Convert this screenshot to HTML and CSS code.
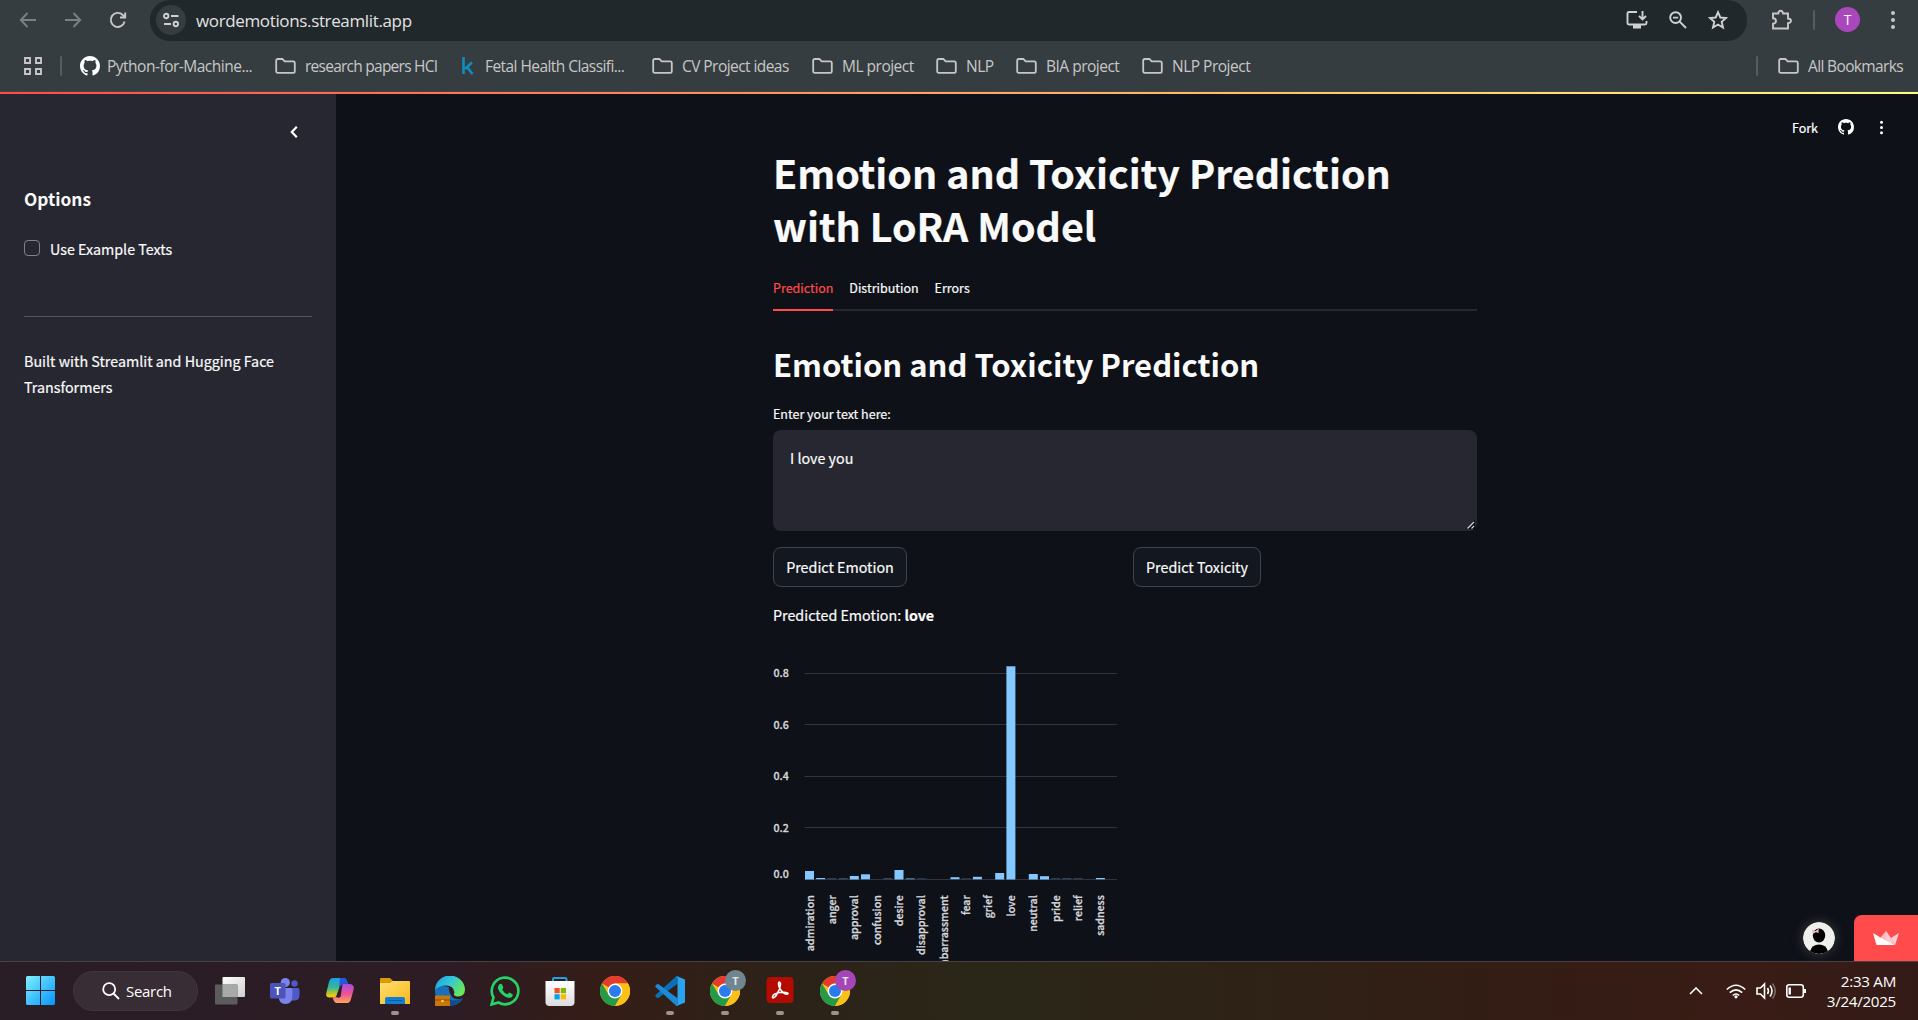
FILE: index.html
```html
<!DOCTYPE html>
<html lang="en">
<head>
<meta charset="utf-8">
<title>Emotion and Toxicity Prediction</title>
<link rel="stylesheet" href="styles.css">
</head>
<body>
<svg width="0" height="0" class="defs" aria-hidden="true">
  <defs>
    <symbol id="folder" viewBox="0 0 21 16"><path d="M1.2 2.6Q1.2 1 2.8 1H7.4L9.6 3.4H18.2Q19.8 3.4 19.8 5V13.2Q19.8 14.8 18.2 14.8H2.8Q1.2 14.8 1.2 13.2Z" fill="none" stroke="currentColor" stroke-width="1.8"/></symbol>
    <symbol id="github" viewBox="0 0 16 16"><path fill="currentColor" d="M8 0C3.58 0 0 3.58 0 8c0 3.54 2.29 6.53 5.47 7.59.4.07.55-.17.55-.38 0-.19-.01-.82-.01-1.49-2.01.37-2.53-.49-2.69-.94-.09-.23-.48-.94-.82-1.13-.28-.15-.68-.52-.01-.53.63-.01 1.08.58 1.23.82.72 1.21 1.87.87 2.33.66.07-.52.28-.87.51-1.07-1.78-.2-3.64-.89-3.64-3.95 0-.87.31-1.59.82-2.15-.08-.2-.36-1.02.08-2.12 0 0 .67-.21 2.2.82.64-.18 1.32-.27 2-.27s1.36.09 2 .27c1.53-1.04 2.2-.82 2.2-.82.44 1.1.16 1.92.08 2.12.51.56.82 1.27.82 2.15 0 3.07-1.87 3.75-3.65 3.95.29.25.54.73.54 1.48 0 1.07-.01 1.93-.01 2.2 0 .21.15.46.55.38A8.01 8.01 0 0 0 16 8c0-4.42-3.58-8-8-8Z"/></symbol>
    <symbol id="dots" viewBox="0 0 6 20"><g fill="currentColor"><circle cx="3" cy="3" r="2"/><circle cx="3" cy="10" r="2"/><circle cx="3" cy="17" r="2"/></g></symbol>
    <symbol id="chrome" viewBox="0 0 30 30">
      <circle cx="15" cy="15" r="15" fill="#fbc116"/>
      <path d="M15 15 2 7.5A15 15 0 0 1 28 7.5H15Z" fill="#e33b2e"/>
      <path d="M2 7.5A15 15 0 0 0 15 30L21.5 18.7 8.6 18.5Z" fill="#259b4a"/>
      <path d="M15 30A15 15 0 0 0 28 7.5H15L21.5 18.7Z" fill="#fbc116"/>
      <circle cx="15" cy="15" r="7.4" fill="#fff"/><circle cx="15" cy="15" r="6" fill="#2a7bee"/>
    </symbol>
    <linearGradient id="win" x1="0" y1="0" x2="1" y2="1"><stop offset="0" stop-color="#7ff0ff"/><stop offset="1" stop-color="#0794fa"/></linearGradient>
    <linearGradient id="gray" x1="0" y1="0" x2="1" y2="1"><stop offset="0" stop-color="#fff"/><stop offset="1" stop-color="#cfcfcf"/></linearGradient>
    <linearGradient id="copA" x1="0" y1="0" x2="0" y2="1"><stop offset="0" stop-color="#1b9df0"/><stop offset=".5" stop-color="#38b98d"/><stop offset=".9" stop-color="#efc70f"/></linearGradient>
    <linearGradient id="copB" x1="0" y1="0" x2="0" y2="1"><stop offset="0" stop-color="#a84bea"/><stop offset=".55" stop-color="#f0558d"/><stop offset="1" stop-color="#ffa95a"/></linearGradient>
    <linearGradient id="fold" x1="0" y1="0" x2="1" y2="1"><stop offset="0" stop-color="#ffdf70"/><stop offset="1" stop-color="#f9b81a"/></linearGradient>
    <linearGradient id="edgeA" x1="0" y1="0" x2="1" y2=".5"><stop offset="0" stop-color="#1f9fe4"/><stop offset=".5" stop-color="#31c4dc"/><stop offset="1" stop-color="#67e75a"/></linearGradient>
    <linearGradient id="bag" x1="0" y1="0" x2="0" y2="1"><stop offset="0" stop-color="#fff"/><stop offset="1" stop-color="#dcdcdc"/></linearGradient>
  </defs>
</svg>

<header class="browser">
  <div class="toolbar">
    <div class="nav">
      <svg class="dim" width="18" height="18" viewBox="0 0 18 18"><path d="M17 9H2M8.500 2 1.800 9l6.700 7" /></svg>
      <svg class="dim" width="18" height="18" viewBox="0 0 18 18"><path d="M1 9H16M9.500 2l6.700 7-6.700 7" /></svg>
      <svg width="18" height="18" viewBox="0 0 18 18"><path d="M15.600 10.500A7 7 0 1 1 13.800 4L16 6.300M16.200 1.500V6.500H11" /></svg>
    </div>
    <div class="omnibox">
      <div class="siteinfo"><svg width="16" height="16" viewBox="0 0 16 16"><circle cx="3.200" cy="4" r="2.200"/><path d="M8 4h7.500M1 12h7"/><circle cx="12.800" cy="12" r="2.200"/></svg></div>
      <span class="url">wordemotions.streamlit.app</span>
      <div class="omni-icons">
        <svg width="22" height="20" viewBox="0 0 22 20"><path d="M11 2H3Q1.500 2 1.500 3.500V13Q1.500 14.500 3 14.500H19Q20.500 14.500 20.500 13V11M16.500 1V9M13 6l3.500 3.500L20 6"/><path d="M7 14.500h8V18.500H7Z" fill="currentColor" stroke="none"/></svg>
        <svg width="18" height="18" viewBox="0 0 18 18"><circle cx="6.600" cy="6.600" r="5.400"/><path d="M10.700 10.700 17 17M4 6.600h5.200"/></svg>
        <svg width="20" height="20" viewBox="0 0 20 20"><path d="M10 2.200 12.300 7.500 18 8 13.700 11.800 15 17.500 10 14.500 5 17.500 6.300 11.800 2 8 7.700 7.500Z"/></svg>
      </div>
    </div>
    <div class="tools">
      <svg width="22" height="22" viewBox="0 0 22 22"><path d="M2 4.500H7.300Q7.500 1.800 9.600 1.800T12 4.500H17V9.500Q20 9.700 20 11.800T17 14.200V19.500H2V14.800Q5 14.500 5 12T2 9.300Z"/></svg>
      <i class="sep"></i>
      <span class="profile">T</span>
      <svg class="kebab" width="6" height="20"><use href="#dots"/></svg>
    </div>
  </div>
  <nav class="bookmarks">
    <svg class="apps" width="20" height="20" viewBox="0 0 20 20"><path d="M2 2h5v5H2ZM13 2h5v5h-5ZM2 13h5v5H2ZM13 13h5v5h-5Z"/></svg>
    <i class="sep"></i>
    <span class="bm b1"><svg class="white" width="20" height="20"><use href="#github"/></svg><span>Python-for-Machine...</span></span>
    <span class="bm b2"><svg width="21" height="16"><use href="#folder"/></svg><span>research papers HCI</span></span>
    <span class="bm b3"><svg class="kaggle" width="12" height="20" viewBox="0 0 12 20"><path d="M1.500 1V18M10 6.500 3 13M5 11l5.500 7"/></svg><span>Fetal Health Classifi...</span></span>
    <span class="bm b4"><svg width="21" height="16"><use href="#folder"/></svg><span>CV Project ideas</span></span>
    <span class="bm b5"><svg width="21" height="16"><use href="#folder"/></svg><span>ML project</span></span>
    <span class="bm b6"><svg width="21" height="16"><use href="#folder"/></svg><span>NLP</span></span>
    <span class="bm b7"><svg width="21" height="16"><use href="#folder"/></svg><span>BIA project</span></span>
    <span class="bm b8"><svg width="21" height="16"><use href="#folder"/></svg><span>NLP Project</span></span>
    <i class="sep last"></i>
    <span class="bm b9"><svg width="21" height="16"><use href="#folder"/></svg><span>All Bookmarks</span></span>
  </nav>
</header>
<div class="decoration"></div>

<div class="app">
  <aside class="sidebar">
    <svg class="collapse" width="8" height="14" viewBox="0 0 8 14"><path d="M6.800 1.800 1.800 7l5 5.200"/></svg>
    <h2>Options</h2>
    <label class="check"><i></i><span>Use Example Texts</span></label>
    <hr>
    <p>Built with Streamlit and Hugging Face<br>Transformers</p>
  </aside>
  <main>
    <div class="block">
      <h1>Emotion and Toxicity Prediction<br>with LoRA Model</h1>
      <div class="tabs"><span class="on">Prediction</span><span>Distribution</span><span>Errors</span></div>
      <h2>Emotion and Toxicity Prediction</h2>
      <div class="label">Enter your text here:</div>
      <div class="textarea">I love you<svg width="9" height="9" viewBox="0 0 9 9"><path d="M0 9 9 0V9Z" fill="#08090c"/><path d="M1.500 8.500 8 2M5.500 8.500 8 6" stroke="#d5d5d8" stroke-width="1.300"/></svg></div>
      <div class="cols"><div><button>Predict Emotion</button></div><div><button class="tox">Predict Toxicity</button></div></div>
      <p class="result">Predicted Emotion: <b>love</b></p>
      <svg class="chart" width="352" height="321" viewBox="0 0 352 321">
        <g class="grid"><path d="M31.500 33.500H344M31.500 84.500H344M31.500 136.500H344M31.500 187.500H344M31.500 239.500H344"/></g>
        <g class="bars">
          <rect x="32" y="231" width="9" height="8.500"/><rect x="43.200" y="238" width="9" height="1.200"/>
          <rect x="54.400" y="238.500" width="9" height=".6" opacity=".5"/><rect x="65.600" y="238.500" width="9" height=".6" opacity=".6"/>
          <rect x="76.800" y="236" width="9" height="3.500"/><rect x="88" y="234.300" width="9" height="5"/>
          <rect x="110.300" y="238.500" width="9" height=".6" opacity=".6"/><rect x="121.500" y="230" width="9" height="9.500"/>
          <rect x="132.700" y="238.500" width="9" height=".7"/><rect x="143.900" y="238.500" width="9" height=".5" opacity=".4"/>
          <rect x="177.500" y="237.200" width="9" height="2"/><rect x="188.700" y="238.500" width="9" height=".6" opacity=".4"/>
          <rect x="199.900" y="236.800" width="9" height="2.500"/><rect x="222.200" y="233" width="9" height="6.500"/>
          <rect x="233.400" y="26.300" width="9" height="213.200"/>
          <rect x="255.800" y="234" width="9" height="5.500"/><rect x="267" y="236.200" width="9" height="3.300"/>
          <rect x="278.200" y="238.500" width="9" height=".5" opacity=".5"/><rect x="289.400" y="238.500" width="9" height=".5" opacity=".6"/>
          <rect x="300.500" y="238.500" width="9" height=".5" opacity=".5"/><rect x="322.900" y="238" width="9" height="1.300"/>
        </g>
        <g class="ticks"><text x="15.800" y="37.300">0.8</text><text x="15.800" y="88.800">0.6</text><text x="15.800" y="140.300">0.4</text><text x="15.800" y="191.800">0.2</text><text x="15.800" y="238">0.0</text></g>
        <g class="ticks">
          <text transform="translate(40.500 255.200) rotate(-90)">admiration</text>
          <text transform="translate(62.700 255.200) rotate(-90)">anger</text>
          <text transform="translate(85 255.200) rotate(-90)">approval</text>
          <text transform="translate(107.500 255.200) rotate(-90)">confusion</text>
          <text transform="translate(129.800 255.200) rotate(-90)">desire</text>
          <text transform="translate(152 255.200) rotate(-90)">disapproval</text>
          <text transform="translate(174.500 255.200) rotate(-90)">embarrassment</text>
          <text transform="translate(197 255.200) rotate(-90)">fear</text>
          <text transform="translate(219 255.200) rotate(-90)">grief</text>
          <text transform="translate(241.800 255.200) rotate(-90)">love</text>
          <text transform="translate(264 255.200) rotate(-90)">neutral</text>
          <text transform="translate(286.500 255.200) rotate(-90)">pride</text>
          <text transform="translate(308.800 255.200) rotate(-90)">relief</text>
          <text transform="translate(331 255.200) rotate(-90)">sadness</text>
        </g>
      </svg>
    </div>
    <div class="actions"><span>Fork</span><svg width="16" height="16"><use href="#github"/></svg><svg class="k2" width="5" height="15"><use href="#dots"/></svg></div>
    <div class="badges">
      <svg class="avatar" width="32" height="32" viewBox="0 0 32 32"><circle cx="16" cy="16" r="16" fill="#efefec"/><ellipse cx="16" cy="13.500" rx="6.200" ry="7" fill="#000"/><path d="M7 29.200Q9 22.500 16 22.500T25 29.200A16 16 0 0 1 7 29.200Z" fill="#000"/><path d="M9 7.500 12.500 9 15.800 6.500 15.500 11 12.800 10.300 9.800 12Z" fill="#f2b3c2"/></svg>
      <div class="crown"><svg width="26" height="15" viewBox="0 0 26 15"><path d="M13 0 6.500 8 19 13Z" fill="#ffb9c0"/><path d="M26 2 18 7 22 14Z" fill="#ffd0d4"/><path d="M13 0 18 7 22 14 13 9Z" fill="#ffc9cf"/><path d="M0 2 10 8 22 14H3.500Z" fill="#fff"/></svg></div>
    </div>
  </main>
</div>

<footer class="taskbar">
  <div class="icons">
    <svg width="30" height="30" viewBox="0 0 30 30"><path d="M1.500 0H14v14H0V1.500Q0 0 1.500 0ZM15 0H27.500Q29 0 29 1.500V14H15ZM0 15H14V29H1.500Q0 29 0 27.500ZM15 15H29V27.500Q29 29 27.500 29H15Z" fill="url(#win)"/></svg>
    <div class="search"><svg width="18" height="18" viewBox="0 0 18 18"><circle cx="7.200" cy="7.200" r="6"/><path d="M11.500 11.500 17 17"/></svg><span>Search</span></div>
    <svg class="t" width="30" height="30" viewBox="0 0 30 30"><rect x="7.500" y="1" width="22.500" height="20" rx="1" fill="url(#gray)"/><rect x="0" y="8.500" width="22.500" height="20" rx="1" fill="#5c5c5c"/><rect x="7.500" y="8.500" width="15" height="12.500" fill="#a9a9a9"/></svg>
    <svg class="t" width="30" height="30" viewBox="0 0 30 30"><circle cx="24.500" cy="7.500" r="3.200" fill="#5059c9"/><path d="M20 12H28Q29.500 12 29.500 13.500V19Q29.500 24 25 24.500H20Z" fill="#5059c9"/><circle cx="15.300" cy="6.500" r="4.600" fill="#7b83eb"/><path d="M9 12H21Q22.300 12 22.300 13.500V20Q22.300 28 15.500 28T8.700 20Z" fill="#7b83eb"/><rect y="7" width="15.500" height="15.500" rx="1.500" fill="#4b53bc"/><text x="7.700" y="18.700" text-anchor="middle" class="tl">T</text></svg>
    <svg class="t" width="30" height="30" viewBox="0 0 30 30"><path d="M8 2H19Q21 2 22 5L23 8H18Q15.500 8 14.800 10.500L12 19Q11 21.500 8 21.500H4Q0 21 1.500 16L4 6Q5 2 8 2Z" fill="url(#copA)"/><path d="M15 2h4q2 0 3 3l1 3h-5q-2.500 0-3.200 2.500l-.8 2.500Z" fill="#2457df"/><path d="M22 27H12Q9.500 27 8.500 24L7.500 21.500Q11 21.500 12 19L14.800 10.500Q15.500 8 18 8H24.500Q30 8.500 28.500 14L26 23Q25 27 22 27Z" fill="url(#copB)"/><path d="M14.800 10.500 17.500 8 15.700 20.500Q15 22.500 11 21Z" fill="#2d202c"/></svg>
    <span class="t run"><svg width="30" height="30" viewBox="0 0 30 30"><path d="M0 3Q0 2 1 2H10L13 5V10H0Z" fill="#dd9a08"/><path d="M0 7H10L13 5H29Q30 5 30 6V28H0Z" fill="url(#fold)"/><path d="M5 28V23Q5 21 7 21H23Q25 21 25 23V28Z" fill="#0f7fd6"/><path d="M8 24.500H22" stroke="#075a9f"/></svg></span>
    <svg class="t" width="30" height="30" viewBox="0 0 30 30"><path d="M0 14A15 14.500 0 0 0 15 29.500Q23 30 28 22.500Q20 25 16.500 20T14 11L4 9Z" fill="#1670bb"/><path d="M0 14A15 14.500 0 0 1 30 14Q29.500 21 22 20.500 17.500 20 19.500 16.500 18.500 9.500 11 9.500 4 9.500 0 14Z" fill="url(#edgeA)"/><path d="M10 18Q14 28 27.500 22.500 22 30 15 30 10 25 10 18Z" fill="#124c87"/><rect y="19.500" width="15" height="10.500" fill="#c97708"/><path d="M0 24H15" stroke="#8c4a05"/><circle cx="7.500" cy="25" r="1.300" fill="#ffd44a"/></svg>
    <svg class="t" width="30" height="30" viewBox="0 0 30 30"><path d="M1.500 28.500 3.500 21.500A13.300 13.300 0 1 1 8.500 26.500Z" fill="none" stroke="#25d366" stroke-width="2.600"/><path d="M9.500 8.300Q11.500 7 12.300 9L13.300 11.500Q13.300 12.500 12.200 13.700 14 17 17.500 18.300L19.300 16.600 22.500 18.200Q23.300 19 21.800 21 19 23 14.500 20.300 9.500 17 8 12.500 7.500 10 9.500 8.300Z" fill="#25d366"/></svg>
    <svg class="t" width="30" height="30" viewBox="0 0 30 30"><path d="M8 6V3Q8 2 9 2H20.500Q21.500 2 21.500 3V6" fill="none" stroke="#1fa1e8" stroke-width="2"/><path d="M.5 5H29.500V26Q29.500 30 25.500 30H4.500Q.5 30 .5 26Z" fill="url(#bag)"/><path d="M9.500 12H14.700V17.200H9.500Z" fill="#f25022"/><path d="M15.700 12H21V17.200H15.700Z" fill="#7fba00"/><path d="M9.500 18.200H14.700V23.400H9.500Z" fill="#00a4ef"/><path d="M15.700 18.200H21V23.400H15.700Z" fill="#ffb900"/></svg>
    <svg class="t" width="30" height="30"><use href="#chrome"/></svg>
    <span class="t run"><svg width="30" height="30" viewBox="0 0 30 30"><path d="M21.500 0 0 19.500 1.500 21.500Q2.500 22.500 4 21.500L22.500 7.800V0Z" fill="#0b6fb8"/><path d="M21.500 30 0 10.500 1.500 8.500Q2.500 7.500 4 8.500L22.500 22.200V30Z" fill="#1b8bd8"/><path d="M21.500 0 30 3.500V26.500L21.500 30Q22.500 29 22.500 27V3Q22.500 1 21.500 0Z" fill="#2ba4f0"/></svg></span>
    <span class="t run"><svg width="30" height="30"><use href="#chrome"/></svg><b class="who slate">T</b></span>
    <span class="t run"><svg width="30" height="30" viewBox="0 0 30 30"><rect x="1.500" y="1" width="27" height="26" rx="4" fill="#b30b00"/><path d="M7.500 21Q8 17.500 15 16.500 22.500 15.500 23 17.500 22.500 19.500 18 16.500 13.500 12 13.500 7.500 14 4.500 15.500 7.500 15.500 13 10.500 20.500 7.500 23 7.500 21Z" fill="none" stroke="#fff" stroke-width="1.600"/></svg></span>
    <span class="t run"><svg width="30" height="30"><use href="#chrome"/></svg><b class="who violet">T</b></span>
  </div>
  <div class="tray">
    <svg width="14" height="8" viewBox="0 0 14 8"><path d="M1 7 7 1l6 6"/></svg>
    <svg class="wifi" width="20" height="15" viewBox="0 0 20 15"><path d="M.8 5.500Q10-3 19.200 5.500M3.800 8.700Q10 3 16.200 8.700M6.800 11.500Q10 8.500 13.200 11.500"/><circle cx="10" cy="12.800" r="1.600" fill="#fff" stroke="none"/></svg>
    <svg class="vol" width="21" height="18" viewBox="0 0 21 18"><path d="M1 6H4.500L8.500 2V16L4.500 12H1Z"/><path d="M11.500 6Q13.500 9 11.500 12M14 3.500Q18 9 14 14.500"/><path d="M16.500 1.500Q22 9 16.500 16.500" opacity=".35"/></svg>
    <svg class="bat" width="21" height="14" viewBox="0 0 21 14"><rect x=".8" y=".8" width="16.500" height="12.400" rx="2.500"/><path d="M3.700 3.500V10.500" stroke-width="2.400"/><path d="M19 5V9" stroke-width="2"/></svg>
    <div class="clock"><span>2:33 AM</span><span>3/24/2025</span></div>
  </div>
</footer>
</body>
</html>
```
FILE: styles.css
```css
* { box-sizing: border-box; }
body { margin: 0; width: 1918px; height: 1020px; overflow: hidden; display: flex; flex-direction: column; background: #0e1117; color: #fafafa; font-family: "Noto Sans CJK SC", sans-serif; }
svg { display: block; flex: none; }
.defs { position: absolute; }

/* Browser chrome */
.browser { height: 92px; background: #363d40; color: #c7c7c7; font-family: "Open Sans", "Noto Sans", sans-serif; border-bottom: 1px solid #3f4447; }
.browser svg { fill: none; stroke: currentColor; stroke-width: 1.9; }
.browser use { stroke: none; }
.toolbar { height: 41px; display: flex; }
.nav { width: 150px; height: 39px; padding-left: 19px; display: flex; align-items: center; gap: 27px; }
.nav .dim { color: #7b8082; }
.omnibox { width: 1597px; height: 41px; background: #20282b; border-radius: 20px; display: flex; align-items: center; padding: 0 19px 2px 6px; color: #cfd0d0; }
.siteinfo { width: 30px; height: 30px; border-radius: 50%; background: #363d40; display: grid; place-items: center; }
.url { margin-left: 10px; padding-top: 1px; font-size: 17px; color: #e3e3e3; letter-spacing: -.36px; }
.omni-icons { margin-left: auto; display: flex; align-items: center; gap: 21px; }
.tools { flex: 1; height: 39px; display: flex; align-items: center; padding-left: 24px; }
.sep { width: 2px; height: 20px; background: #565c5f; border-radius: 1px; flex: none; }
.tools .sep { margin-left: 20px; }
.profile { width: 25px; height: 25px; border-radius: 50%; margin-left: 20px; background: #ab47bc; color: #fff; font-size: 14px; line-height: 25px; text-align: center; }
.kebab { margin-left: 30px; }
.bookmarks { height: 50px; display: flex; align-items: center; padding-left: 23px; font-size: 15.500px; }
.bookmarks > .sep { margin: 0 18px 0 17px; }
.bm { display: flex; align-items: center; white-space: nowrap; letter-spacing: -.5px; flex: none; }
.bm > span { margin-left: 9px; }
.bm .white { color: #fff; }
.bm .kaggle { color: #108ec2; stroke-width: 2.500; }
.b1 { width: 195px; } .b2 { width: 187px; } .b3 { width: 190px; } .b4 { width: 160px; } .b5 { width: 124px; } .b6 { width: 80px; } .b7 { width: 126px; } .b8 { width: 120px; }
.b1 > span { margin-left: 7px; }
.b2 { letter-spacing: -.75px; }
.b3, .b4 { letter-spacing: -.56px; }
.b3 > span { margin-left: 11px; }
.bookmarks > .last { margin-left: auto; margin-right: 20px; }
.b9 { width: 140px; letter-spacing: -.64px; }
.decoration { height: 2px; background: linear-gradient(90deg, #ff4b4b, #fffd80); }

/* Streamlit app */
.app { height: 867px; display: flex; -webkit-text-stroke: .2px; }
.sidebar { width: 336px; background: #262730; padding: 31px 24px 0; font-size: 14.300px; }
.collapse { margin-left: 266px; fill: none; stroke: #fff; stroke-width: 2.200; }
.sidebar h2 { margin: 46px 0 0; font-size: 17.300px; line-height: 28px; font-weight: 700; -webkit-text-stroke: 0; }
.check { display: flex; align-items: center; gap: 10px; height: 26px; margin-top: 22px; }
.check i { width: 16px; height: 16px; border: 1px solid #80818a; border-radius: 4px; }
.sidebar hr { margin: 55px 0 31px; border: 0; height: 1px; background: #54555d; }
.sidebar p { margin: 0; line-height: 26px; }
main { width: 1582px; position: relative; padding-left: 437px; overflow: hidden; }
.block { width: 704px; padding-top: 51px; display: flex; flex-direction: column; }
h1 { margin: 0; font-size: 39.400px; line-height: 53px; font-weight: 700; white-space: nowrap; }
.tabs { display: flex; gap: 16px; height: 40px; margin-top: 20px; border-bottom: 2px solid #262730; font-size: 12.500px; line-height: 33px; }
.tabs span { height: 40px; }
.tabs .on { color: #ff4b4b; border-bottom: 2px solid #ff4b4b; }
.block h2 { margin: 31px 0 0; font-size: 31px; line-height: 43px; font-weight: 600; -webkit-text-stroke: 0; white-space: nowrap; }
.label { margin-top: 19px; font-size: 12.500px; line-height: 20px; }
.textarea { position: relative; margin-top: 6px; height: 101px; border-radius: 8px; background: #262730; padding: 15px 17px; font-size: 14.300px; line-height: 26px; }
.textarea svg { position: absolute; right: 2px; bottom: 2px; }
.cols { display: grid; grid-template-columns: 360px 1fr; margin-top: 16px; }
button { display: block; height: 40px; width: 134px; padding: 0 0 2px; border: 1px solid #41444c; border-radius: 8px; background: #131720; color: #fafafa; font: 14.300px "Noto Sans CJK SC", sans-serif; white-space: nowrap; -webkit-text-stroke: .2px; }
.tox { width: 128px; }
.result { margin: 15px 0 0; font-size: 14.300px; line-height: 26px; }
.chart { margin-top: 12px; }
.grid { stroke: #31333f; fill: none; }
.bars { fill: #83c9ff; }
.ticks { fill: #d6d7dc; stroke: #d6d7dc; stroke-width: .3px; -webkit-text-stroke: .3px #d6d7dc; font-size: 10.600px; text-anchor: end; font-weight: 500; }
.actions { position: absolute; right: 34px; top: 23px; height: 20px; display: flex; align-items: center; gap: 20px; font-size: 12.500px; color: #fff; }
.actions .k2 { margin-left: 5px; }
.badges { position: absolute; right: 0; bottom: 0; display: flex; align-items: flex-end; gap: 19px; }
.avatar { margin-bottom: 7px; border-radius: 50%; box-shadow: 0 0 12px #3b3d42; }
.crown { width: 64px; height: 46px; background: #ff4b4b; border-radius: 8px 0 0; display: grid; place-items: center; }

/* Windows taskbar */
.taskbar { height: 59px; border-top: 1px solid #494142; background: linear-gradient(90deg, #291d26 0, #2d1c24 450px, #351d17 600px, #2c2218 780px, #2a2718 1000px, #331d14 1500px, #391c15 1750px, #331a17 1918px); display: flex; justify-content: space-between; color: #fff; font-family: "Open Sans", sans-serif; }
.icons { display: flex; align-items: center; padding-left: 26px; }
.search { margin: 0 17px; width: 125px; height: 40px; border-radius: 20px; background: #392d35; border: 1px solid #42363e; display: flex; align-items: center; padding-left: 28px; gap: 6px; font-size: 15px; letter-spacing: -.3px; }
.search svg { fill: none; stroke: #fff; stroke-width: 1.800; }
.t { margin-right: 25px; position: relative; width: 30px; height: 30px; }
.tl { font: bold 11px "Open Sans", sans-serif; fill: #fff; }
.run::after { content: ""; position: absolute; left: 11px; top: 35px; width: 8px; height: 4px; border-radius: 2px; background: #9c948e; }
.who { position: absolute; left: 15px; top: -6px; width: 21px; height: 21px; border-radius: 50%; font-size: 11px; line-height: 21px; text-align: center; color: #e5e5e5; }
.slate { background: #70858f; } .violet { background: #a546b8; }
.tray { display: flex; align-items: center; padding-right: 22px; }
.tray svg { fill: none; stroke: #fff; stroke-width: 1.600; }
.wifi { margin-left: 23px; } .vol { margin-left: 10px; } .bat { margin-left: 9px; }
.clock { width: 89px; display: flex; flex-direction: column; align-items: flex-end; font-size: 15.200px; line-height: 20px; letter-spacing: -.3px; }
```
